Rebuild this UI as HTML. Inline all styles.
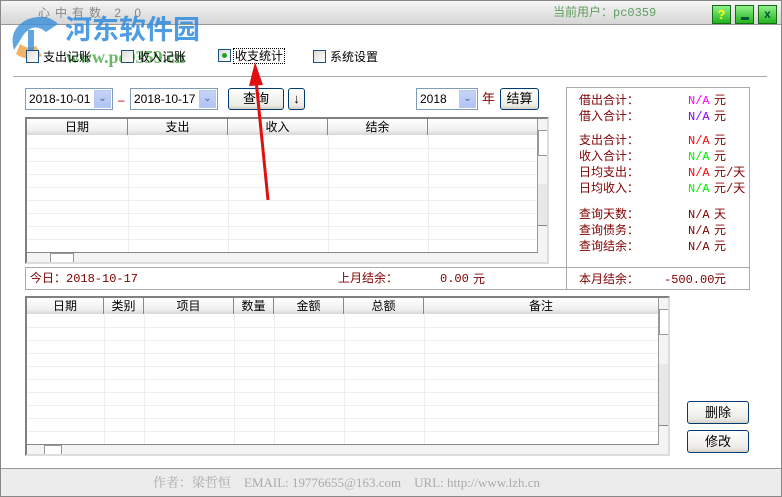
<!DOCTYPE html>
<html><head><meta charset="utf-8"><style>
*{margin:0;padding:0;box-sizing:border-box}
body{width:782px;height:497px;overflow:hidden;background:#fff;font-family:"Liberation Sans","Noto Sans CJK SC",sans-serif;font-size:12px;position:relative}
.a{position:absolute}
.cb{position:absolute;width:13px;height:13px;border:1px solid #1c5180;background:linear-gradient(135deg,#dcdcd6,#fff)}
.t{position:absolute;font-size:12px;line-height:14px;white-space:nowrap}
.combo{position:absolute;height:22px;border:1px solid #7f9db9;background:#fff;font-family:"Liberation Sans",sans-serif;font-size:12px;line-height:20px;padding-left:3px;white-space:nowrap}
.combo i{position:absolute;right:1px;top:1px;width:17px;height:18px;background:linear-gradient(#c6d3f7,#b0c4f5);border:1px solid #b8c8f0;font-style:normal;color:#4d6185;font-size:10px;text-align:center;line-height:16px}
.btn{position:absolute;border:1px solid #003c74;border-radius:3px;background:linear-gradient(#fff,#ecebe6 80%,#d6d0c5);text-align:center;font-size:13px}
.grid{position:absolute;border:2px solid #808080;border-right-color:#ddd;border-bottom-color:#ddd;background:#fff;overflow:hidden}
.hd{position:absolute;top:0;height:16px;background:linear-gradient(#fff,#f0f0f0 70%,#d8d8d8);border-right:1px solid #888;text-align:center;font-size:12px;line-height:16px}
.row{position:absolute;left:0;right:0;height:1px;background:#eee}
.col{position:absolute;top:16px;bottom:0;width:1px;background:#eee}
.mono{font-family:"Liberation Mono","Noto Sans CJK SC",monospace}
.dr{color:#800000}
</style></head><body>
<div class="a" style="left:0;top:0;width:782px;height:497px;border:1px solid #888"></div>
<div class="a" style="left:1px;top:1px;width:780px;height:24px;background:linear-gradient(#f6f6f6,#e2e2e2 60%,#d6d6d6);border-bottom:1px solid #999"></div>
<div class="t" style="left:38px;top:6px;color:#888;letter-spacing:5px;font-size:12px">心中有数 2.0</div>
<div class="t mono" style="left:553px;top:6px;color:#5e9e5e">当前用户：pc0359</div>
<div class="a" style="left:712px;top:5px;width:19px;height:19px;background:linear-gradient(#8ef08a,#23b41d);border:1px solid #176b13;color:#ff0;font-weight:bold;text-align:center;line-height:17px;font-size:13px">?</div>
<div class="a" style="left:735px;top:5px;width:19px;height:19px;background:linear-gradient(#8ef08a,#23b41d);border:1px solid #176b13"><div class="a" style="left:5px;top:11px;width:8px;height:3px;background:#053"></div></div>
<div class="a" style="left:758px;top:5px;width:19px;height:19px;background:linear-gradient(#8ef08a,#23b41d);border:1px solid #176b13;color:#053;font-weight:bold;text-align:center;line-height:17px;font-size:12px">x</div>
<svg class="a" style="left:6px;top:10px" width="60" height="55"><path d="M8 40 Q2 20 20 10 Q40 2 52 14 L40 22 Q28 12 18 24 Z" fill="#3a8fd8" opacity=".8"/><path d="M10 44 Q20 52 36 46 L30 36 Q22 40 14 34Z" fill="#f0a040" opacity=".8"/><rect x="22" y="20" width="6" height="22" fill="#3a8fd8" opacity=".8"/></svg>
<div class="t" style="left:65px;top:14px;font-size:27px;line-height:32px;font-weight:bold;color:#2f8be0;opacity:.85">河东软件园</div>
<div class="t" style="left:66px;top:47px;font-size:18px;line-height:20px;font-weight:bold;color:#38a038;opacity:.75;font-family:'Liberation Serif',serif">www.pc0359.cn</div>
<div class="cb" style="left:26px;top:50px"></div><div class="t" style="left:43px;top:50px">支出记账</div>
<div class="cb" style="left:121px;top:50px"></div><div class="t" style="left:138px;top:50px">收入记账</div>
<div class="cb" style="left:218px;top:49px"><div class="a" style="left:3px;top:3px;width:5px;height:5px;border-radius:50%;background:#21a121"></div></div><div class="t" style="left:233px;top:48px;border:1px dotted #000;padding:0 1px">收支统计</div>
<div class="cb" style="left:313px;top:50px"></div><div class="t" style="left:330px;top:50px">系统设置</div>
<div class="a" style="left:13px;top:76px;width:754px;height:1px;background:#aaa"></div>
<div class="combo" style="left:25px;top:88px;width:88px">2018-10-01<i>&#8964;</i></div>
<div class="t" style="left:118px;top:93px;color:#c00">–</div>
<div class="combo" style="left:130px;top:88px;width:88px">2018-10-17<i>&#8964;</i></div>
<div class="btn" style="left:228px;top:88px;width:56px;height:22px;line-height:20px">查询</div>
<div class="btn" style="left:288px;top:88px;width:17px;height:22px;line-height:20px">↓</div>
<div class="combo" style="left:416px;top:88px;width:62px">2018<i>&#8964;</i></div>
<div class="t dr" style="left:482px;top:92px;font-size:13px">年</div>
<div class="btn" style="left:500px;top:88px;width:39px;height:22px;line-height:20px">结算</div>
<div class="grid" style="left:25px;top:117px;width:524px;height:147px">
<div class="hd" style="left:0;width:101px">日期</div><div class="hd" style="left:101px;width:100px">支出</div><div class="hd" style="left:201px;width:100px">收入</div><div class="hd" style="left:301px;width:100px">结余</div><div class="hd" style="left:401px;width:110px;border-right:0"></div>
<div class="row" style="top:29px"></div><div class="row" style="top:42px"></div><div class="row" style="top:55px"></div><div class="row" style="top:68px"></div><div class="row" style="top:81px"></div><div class="row" style="top:94px"></div><div class="row" style="top:107px"></div><div class="row" style="top:120px"></div>
<div class="col" style="left:101px"></div><div class="col" style="left:201px"></div><div class="col" style="left:301px"></div><div class="col" style="left:401px"></div>
<div class="a" style="left:510px;top:0;width:12px;bottom:0;background:#f4f4f4;border-left:1px solid #999"><div class="a" style="left:0;top:11px;width:11px;height:26px;border:1px solid #999;background:#fff"></div><div class="a" style="left:0;top:65px;width:11px;height:42px;background:#e8e8e8;border-bottom:1px solid #888"></div></div>
<div class="a" style="left:0;top:133px;width:511px;height:12px;background:#f4f4f4;border-top:1px solid #888"><div class="a" style="left:23px;top:0;width:24px;height:11px;border:1px solid #999;background:#fff"></div></div>
</div>
<div class="a" style="left:25px;top:267px;width:550px;height:23px;border:1px solid #aaa;border-right:0"></div>
<div class="t dr mono" style="left:30px;top:272px">今日：2018-10-17</div>
<div class="t dr mono" style="left:338px;top:272px">上月结余：</div>
<div class="t dr mono" style="left:440px;top:272px">0.00</div><div class="t dr" style="left:473px;top:272px">元</div>
<div class="a" style="left:566px;top:87px;width:184px;height:203px;border:1px solid #aaa"></div>
<div class="a" style="left:560px;top:267px;width:190px;height:1px;background:#aaa"></div>
<div class="mono" style="position:absolute;left:579px;top:93px;font-size:12px;line-height:16px">
<div class="a dr" style="top:0;white-space:nowrap">借出合计：</div><div class="a" style="top:0;left:109px;color:#f0f">N/A</div><div class="a dr" style="top:0;left:135px">元</div>
<div class="a dr" style="top:16px;white-space:nowrap">借入合计：</div><div class="a" style="top:16px;left:109px;color:#80f">N/A</div><div class="a dr" style="top:16px;left:135px">元</div>
<div class="a dr" style="top:40px;white-space:nowrap">支出合计：</div><div class="a" style="top:40px;left:109px;color:#f00">N/A</div><div class="a dr" style="top:40px;left:135px">元</div>
<div class="a dr" style="top:56px;white-space:nowrap">收入合计：</div><div class="a" style="top:56px;left:109px;color:#0e0">N/A</div><div class="a dr" style="top:56px;left:135px">元</div>
<div class="a dr" style="top:72px;white-space:nowrap">日均支出：</div><div class="a" style="top:72px;left:109px;color:#f00">N/A</div><div class="a dr" style="top:72px;left:135px;white-space:nowrap">元/天</div>
<div class="a dr" style="top:88px;white-space:nowrap">日均收入：</div><div class="a" style="top:88px;left:109px;color:#0e0">N/A</div><div class="a dr" style="top:88px;left:135px;white-space:nowrap">元/天</div>
<div class="a dr" style="top:114px;white-space:nowrap">查询天数：</div><div class="a dr" style="top:114px;left:109px">N/A</div><div class="a dr" style="top:114px;left:135px">天</div>
<div class="a dr" style="top:130px;white-space:nowrap">查询债务：</div><div class="a dr" style="top:130px;left:109px">N/A</div><div class="a dr" style="top:130px;left:135px">元</div>
<div class="a dr" style="top:146px;white-space:nowrap">查询结余：</div><div class="a dr" style="top:146px;left:109px">N/A</div><div class="a dr" style="top:146px;left:135px">元</div>
<div class="a dr" style="top:179px;white-space:nowrap">本月结余：</div><div class="a dr" style="top:179px;left:85px">-500.00</div><div class="a dr" style="top:179px;left:135px">元</div>
</div>
<div class="grid" style="left:25px;top:296px;width:645px;height:160px">
<div class="hd" style="left:0;width:77px">日期</div><div class="hd" style="left:77px;width:40px">类别</div><div class="hd" style="left:117px;width:90px">项目</div><div class="hd" style="left:207px;width:40px">数量</div><div class="hd" style="left:247px;width:70px">金额</div><div class="hd" style="left:317px;width:80px">总额</div><div class="hd" style="left:397px;width:234px;border-right:0">备注</div>
<div class="row" style="top:29px"></div><div class="row" style="top:42px"></div><div class="row" style="top:55px"></div><div class="row" style="top:68px"></div><div class="row" style="top:81px"></div><div class="row" style="top:94px"></div><div class="row" style="top:107px"></div><div class="row" style="top:120px"></div><div class="row" style="top:133px"></div>
<div class="col" style="left:77px"></div><div class="col" style="left:117px"></div><div class="col" style="left:207px"></div><div class="col" style="left:247px"></div><div class="col" style="left:317px"></div><div class="col" style="left:397px"></div>
<div class="a" style="left:631px;top:0;width:12px;bottom:0;background:#f4f4f4;border-left:1px solid #999"><div class="a" style="left:0;top:11px;width:11px;height:26px;border:1px solid #999;background:#fff"></div><div class="a" style="left:0;top:66px;width:11px;height:62px;background:#e8e8e8;border-bottom:1px solid #888"></div></div>
<div class="a" style="left:0;top:146px;width:632px;height:12px;background:#f4f4f4;border-top:1px solid #888"><div class="a" style="left:17px;top:0;width:18px;height:11px;border:1px solid #999;background:#fff"></div></div>
</div>
<div class="btn" style="left:687px;top:401px;width:62px;height:23px;line-height:21px">删除</div>
<div class="btn" style="left:687px;top:430px;width:62px;height:23px;line-height:21px">修改</div>
<div class="a" style="left:1px;top:468px;width:780px;height:28px;background:#ececec;border-top:1px solid #999"></div>
<div class="t" style="left:153px;top:476px;color:#aaa;font-family:'Liberation Serif','Noto Serif CJK SC',serif;font-size:13px">作者：梁哲恒 &nbsp;&nbsp; EMAIL: 19776655@163.com &nbsp;&nbsp; URL: http://www.lzh.cn</div>
<svg class="a" style="left:0;top:0" width="782" height="497">
<line x1="268" y1="200" x2="256" y2="80" stroke="#e01010" stroke-width="3"/>
<polygon points="255,62 249,86 263,85" fill="#e01010"/>
</svg>
</body></html>
